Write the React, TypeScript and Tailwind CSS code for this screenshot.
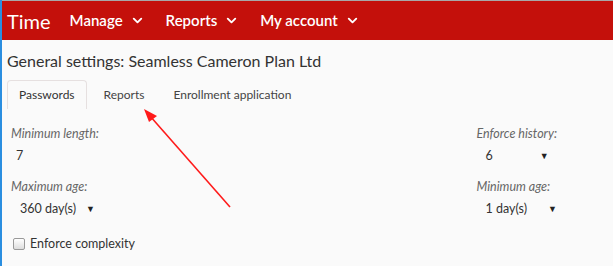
import { ChevronDown } from 'lucide-react';

const navItems = ['Manage', 'Reports', 'My account'];

function Select({ label, value, gap, indent = 'pl-[9px]' }: { label: string; value: string; gap?: string; indent?: string }) {
  return (
    <div className="flex flex-col">
      <span className="text-[12.5px] italic text-[#666] leading-[18px]">{label}</span>
      <div className={`flex items-center mt-[4px] text-[12.5px] text-[#333] leading-[18px] ${indent} ${gap ?? ''}`}>
        <span>{value}</span>
        {gap && <span className="text-[9px] text-[#222]">▼</span>}
      </div>
    </div>
  );
}

export default function App() {
  return (
    <div className="w-[613px] h-[266px] overflow-hidden bg-[#fafafa] border-l-2 border-[#2a8ee0] relative" style={{ fontFamily: 'Lato, "Open Sans", sans-serif' }}>
      <div className="h-[1px] bg-[#a8a8a8]" />
      {/* Top nav */}
      <header className="h-[39px] bg-[#c4100b] flex items-center text-white">
        <span className="ml-[5px] text-[20px] leading-none">Time</span>
        <nav className="flex items-center ml-[19px] gap-[21px]">
          {navItems.map((item) => (
            <div key={item} className="flex items-center gap-[7px] text-[15px] font-semibold">
              {item}
              <ChevronDown className="w-[15px] h-[15px]" strokeWidth={3} />
            </div>
          ))}
        </nav>
      </header>

      <div className="px-[5px]">
        <h1 className="mt-[11px] text-[16px] text-[#333] leading-[20px]">General settings: Seamless Cameron Plan Ltd</h1>

        {/* Tabs */}
        <div className="flex mt-[9px] text-[12px] text-[#333]">
          <div className="h-[29px] px-[11px] flex items-center border border-b-0 border-[#e6e0e0] rounded-t-[4px] bg-[#fafafa]">Passwords</div>
          <div className="h-[29px] px-[17px] flex items-center text-[#444]">Reports</div>
          <div className="h-[29px] px-[12px] flex items-center text-[#444]">Enrollment application</div>
        </div>

        {/* Form */}
        <div className="flex justify-between mt-[16px] pl-[4px] pr-[51px]">
          <div className="flex flex-col gap-[13px]">
            <Select label="Minimum length:" value="7" indent="pl-[5px]" />
            <Select label="Maximum age:" value="360 day(s)" gap="gap-[10px]" />
          </div>
          <div className="flex flex-col gap-[13px]">
            <Select label="Enforce history:" value="6" gap="gap-[47px]" />
            <Select label="Minimum age:" value="1 day(s)" gap="gap-[21px]" />
          </div>
        </div>

        <label className="flex items-center gap-[5px] mt-[17px] pl-[6px] text-[12.5px] text-[#333]">
          <span className="w-[12px] h-[12px] rounded-[2px] border border-[#999] bg-gradient-to-b from-[#fff] to-[#ddd]" />
          Enforce complexity
        </label>
      </div>

      {/* Annotation arrow */}
      <svg className="absolute left-0 top-0 pointer-events-none" width="613" height="266">
        <line x1="228" y1="207" x2="148" y2="116" stroke="#ff1a1a" strokeWidth="1.6" />
        <polygon points="142,109 155,116 147,122" fill="#ff1a1a" />
      </svg>
    </div>
  );
}
